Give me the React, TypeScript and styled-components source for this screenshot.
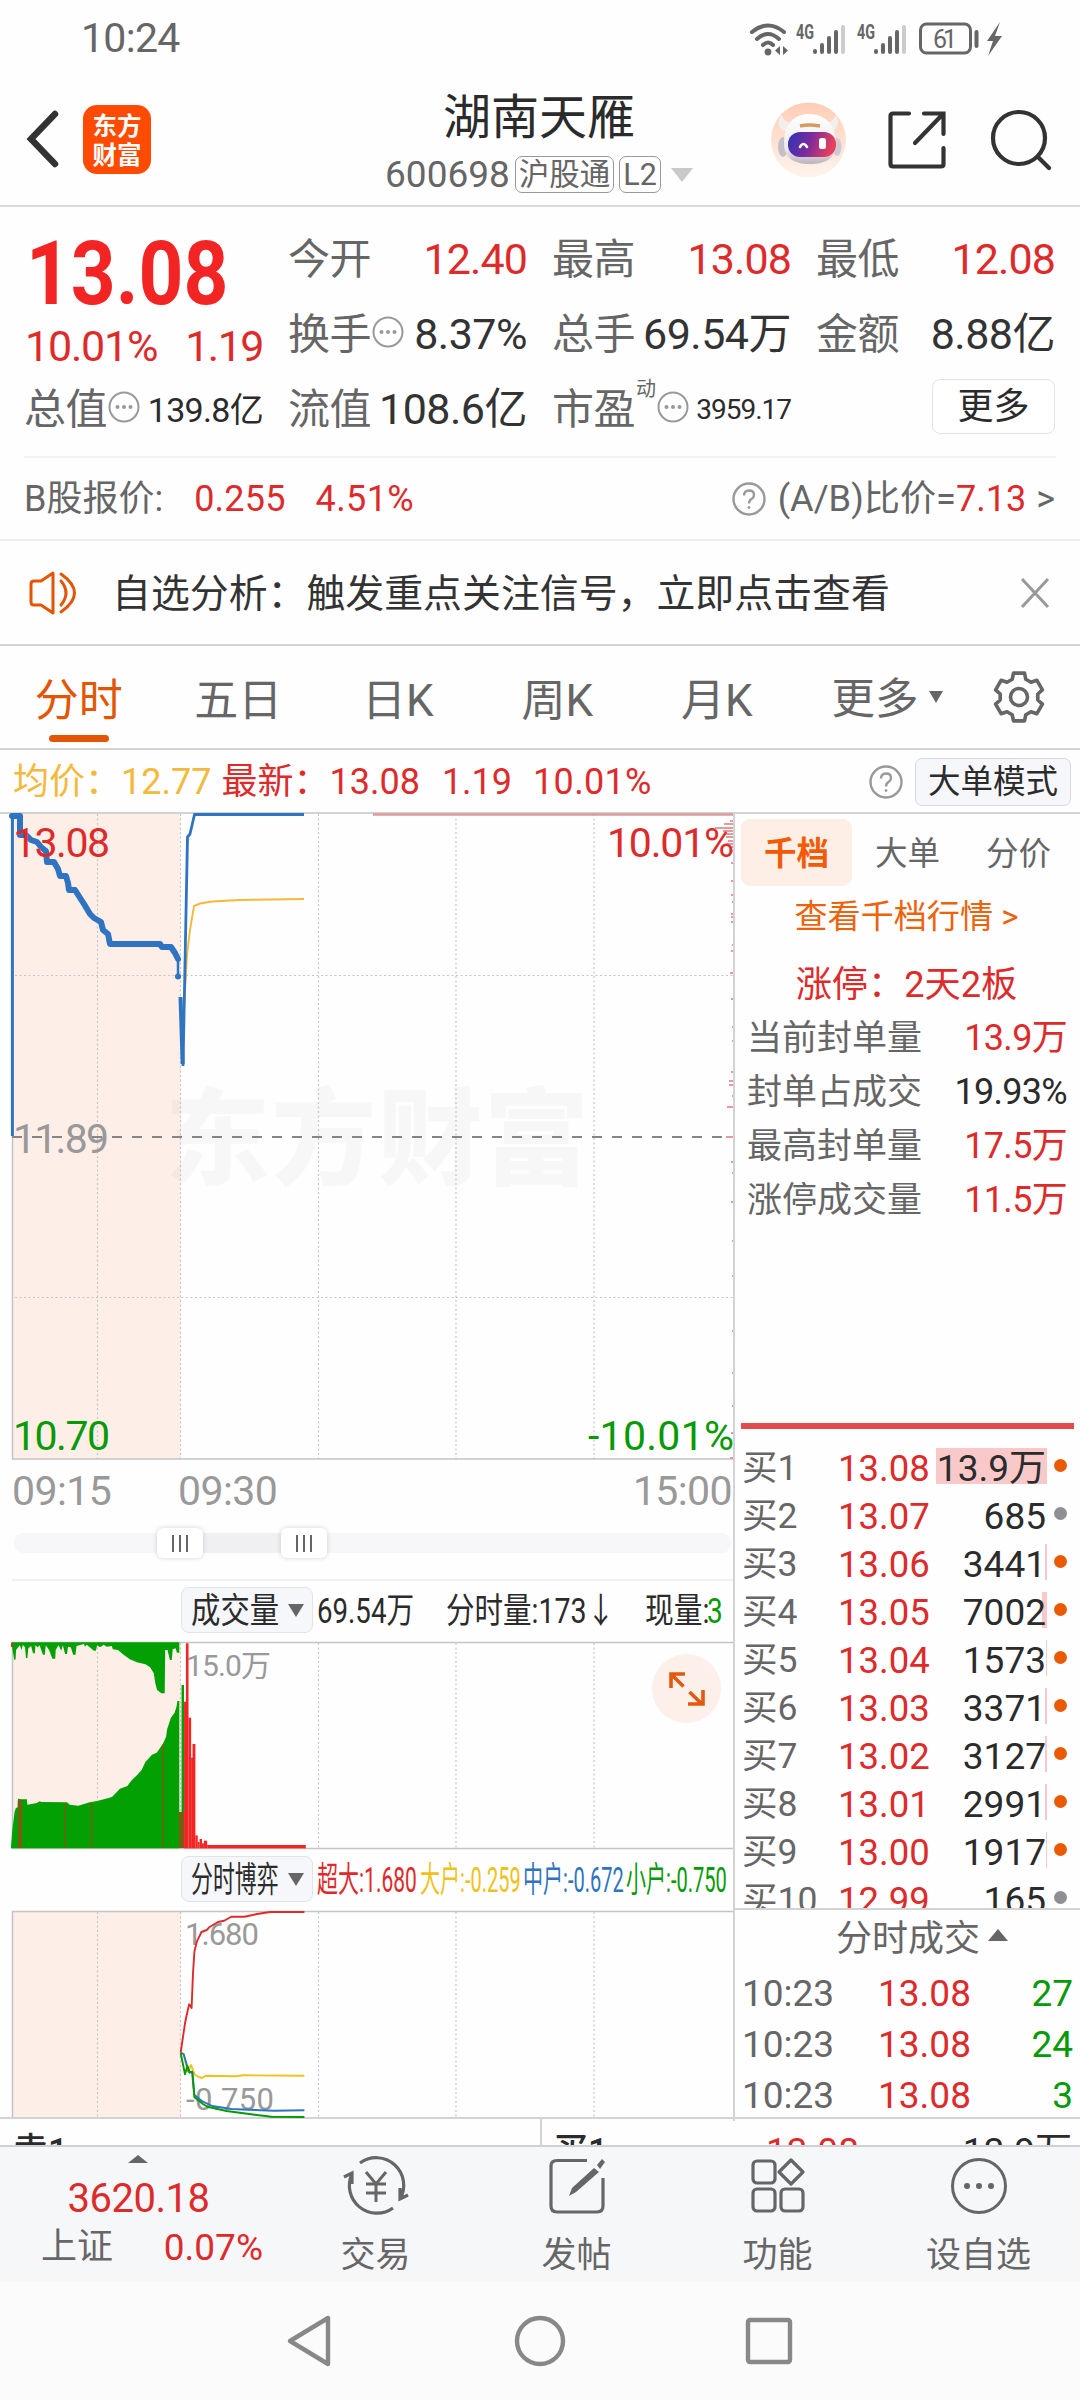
import React from 'react';
import styled, { createGlobalStyle } from 'styled-components';

const C = {
  red: '#dd2b2b',
  hot: '#f22424',
  orange: '#e35504',
  green: '#069a06',
  blue: '#2f74c0',
  gold: '#f3b93c',
  yellow: '#efc11c',
  ink: '#2b2b2b',
  grey: '#666',
  pale: '#999',
  line: '#d2d3d5',
};

const Global = createGlobalStyle`
  * { box-sizing: border-box; }
  body { margin: 0; background: #fefefe; }
  svg { display: block; flex: none; overflow: visible; }
`;

const Screen = styled.div`
  width: 1080px;
  height: 2400px;
  overflow: hidden;
  display: flex;
  flex-direction: column;
  background: #fefefe;
  color: ${C.ink};
  font-family: Roboto, 'Noto Sans CJK SC', sans-serif;
  white-space: nowrap;
  line-height: 1;
`;

const Text = styled.span<{ $size?: number; $color?: string; $ls?: number; $weight?: number }>`
  font-size: ${(p) => p.$size ?? 36}px;
  color: ${(p) => p.$color ?? C.ink};
  letter-spacing: ${(p) => p.$ls ?? 0}px;
  font-weight: ${(p) => p.$weight ?? 400};
`;

/* ---------- status bar and header ---------- */

const StatusBar = styled.div`
  height: 76px;
  padding: 1px 77px 0 81px;
  display: flex;
  align-items: center;
  justify-content: space-between;
`;

const Header = styled.header`
  height: 131px;
  padding: 0 28px 0 27px;
  display: grid;
  grid-template-columns: 300px 1fr 302px;
  border-bottom: 2px solid #d9d9d9;
`;

const HeaderLeft = styled.div`
  display: flex;
  align-items: center;
  gap: 24px;
  padding-bottom: 3px;
`;

const Logo = styled.div`
  width: 68px;
  height: 69px;
  border-radius: 14px;
  background: #ff4a02;
  display: grid;
  place-content: center;
  color: #fff;
  font: 700 24.5px/29px 'Noto Sans CJK SC', sans-serif;
  white-space: pre-line;
  padding-bottom: 1px;
`;

const HeaderTitle = styled.div`
  display: flex;
  flex-direction: column;
  align-items: center;
  padding: 18px 0 0 1px;
  gap: 14px;
`;

const CodeRow = styled.div`
  display: flex;
  align-items: center;
  gap: 5px;
  height: 37px;
`;

const Tag = styled.span`
  height: 37px;
  padding: 1px 3px 0;
  border: 1.5px solid #999;
  border-radius: 7px;
  display: flex;
  align-items: center;
  color: ${C.grey};
  font-size: 30.5px;
`;

const HeaderRight = styled.div`
  display: flex;
  align-items: center;
  justify-content: flex-end;
  padding-bottom: 2px;
`;

/* ---------- quote ---------- */

const Quote = styled.section`
  height: 251px;
  margin: 0 24px;
  padding: 15px 1px 0;
  display: grid;
  grid-template-columns: repeat(4, 238px);
  grid-template-rows: repeat(3, 75px);
  column-gap: 26px;
  border-bottom: 2px solid #f3f3f3;
`;

const PriceBlock = styled.div`
  grid-row: span 2;
  display: flex;
  flex-direction: column;
`;

const BigPrice = styled.span`
  font-size: 89px;
  font-weight: 700;
  line-height: 103px;
  padding-left: 1px;
  color: ${C.hot};
  transform: scaleX(0.88);
  transform-origin: left center;
`;

const PriceSub = styled.div`
  display: flex;
  justify-content: space-between;
`;

const Cell = styled.div`
  display: flex;
  align-items: center;
  justify-content: space-between;
`;

const CellLabel = styled.span`
  display: flex;
  align-items: center;
  font-size: 42px;
  letter-spacing: -0.5px;
  margin-left: -1px;
  color: ${C.grey};
  & > svg {
    margin: -6px 0 0 1px;
  }
`;

const Sup = styled.sup`
  font-size: 20px;
  align-self: flex-start;
  margin: -10px 0 0 1px;
  line-height: 20px;
`;

const MoreButton = styled.button`
  width: 123px;
  height: 55px;
  margin: -6px 0 0 auto;
  padding: 0;
  border: 1.5px solid #e2e5e6;
  border-radius: 8px;
  background: #fff;
  font: 36px/1 Roboto, 'Noto Sans CJK SC', sans-serif;
  color: ${C.ink};
`;

const BRow = styled.section`
  height: 83px;
  padding: 1px 25px 0 24px;
  display: flex;
  align-items: center;
  border-bottom: 2px solid #eee;
`;

const Spacer = styled.div`
  flex: 1;
`;

const Notice = styled.section`
  height: 105px;
  padding: 1px 30px 0 29px;
  display: flex;
  align-items: center;
  border-bottom: 2px solid ${C.line};
`;

/* ---------- period tabs ---------- */

const PeriodTabs = styled.nav`
  height: 104px;
  display: flex;
  border-bottom: 2px solid ${C.line};
`;

const PeriodTab = styled.button<{ $active?: boolean }>`
  width: 159.5px;
  padding: 0 2px 0 0;
  border: 0;
  background: none;
  display: flex;
  flex-direction: column;
  align-items: center;
  font: 400 44px/110px Roboto, 'Noto Sans CJK SC', sans-serif;
  color: ${(p) => (p.$active ? C.orange : C.grey)};
  &::after {
    content: '';
    width: 60px;
    height: 7px;
    margin-top: -21px;
    border-radius: 4px;
    background: ${(p) => (p.$active ? C.orange : 'transparent')};
  }
`;

const MoreTab = styled.div`
  width: 159px;
  padding: 1px 0 0 34px;
  display: flex;
  align-items: center;
  gap: 10px;
  color: ${C.grey};
  font-size: 43.5px;
  height: 107px;
  & > i {
    margin-bottom: 7px;
  }
`;

const Down = styled.i<{ $w?: number; $h?: number; $c?: string }>`
  width: 0;
  height: 0;
  border: ${(p) => (p.$w ?? 16) / 2}px solid transparent;
  border-top: ${(p) => p.$h ?? 13}px solid ${(p) => p.$c ?? C.grey};
  border-bottom: 0;
`;

const Up = styled.i<{ $w: number; $h: number }>`
  width: 0;
  height: 0;
  border: ${(p) => p.$w / 2}px solid transparent;
  border-bottom: ${(p) => p.$h}px solid ${C.grey};
  border-top: 0;
`;

const InfoRow = styled.section`
  height: 62px;
  padding: 2px 9px 0 13px;
  display: flex;
  align-items: center;
`;

const ModeButton = styled.button`
  width: 156px;
  height: 48px;
  margin-left: 12px;
  padding: 0;
  border: 1.5px solid #d6d9de;
  border-radius: 7px;
  background: #f6f7fa;
  font: 32.5px/1 Roboto, 'Noto Sans CJK SC', sans-serif;
  color: ${C.ink};
`;

/* ---------- main split ---------- */

const Main = styled.main`
  height: 1307px;
  display: grid;
  grid-template-columns: 735px 345px;
  border-top: 2px solid ${C.line};
  border-bottom: 2px solid ${C.line};
`;

const ChartColumn = styled.div`
  border-right: 2px solid ${C.line};
  display: flex;
  flex-direction: column;
`;

const Axis = styled.div`
  height: 72px;
  padding: 12px 1px 0 12px;
  display: grid;
  grid-template-columns: 166px 1fr auto;
  font-size: 41px;
  letter-spacing: -0.6px;
  line-height: 36px;
  color: ${C.pale};
`;

const Slider = styled.div`
  height: 48px;
  margin-left: 12px;
  padding: 0 2px;
  display: flex;
  align-items: flex-start;
  border-bottom: 2px solid #f0f0f0;
`;

const Track = styled.div<{ $w: number; $on?: boolean; $side?: 'l' | 'r' }>`
  width: ${(p) => p.$w}px;
  height: 20px;
  background: ${(p) => (p.$on ? '#f0f0f2' : '#f7f7fa')};
  border-radius: ${(p) => (p.$side === 'l' ? '9px 0 0 9px' : p.$side === 'r' ? '0 9px 9px 0' : 0)};
`;

const Handle = styled.div`
  width: 46px;
  height: 30px;
  margin-top: -5px;
  border-radius: 6px;
  background: #fff;
  box-shadow: 0 0 5px rgba(0, 0, 0, 0.17);
  display: flex;
  align-items: center;
  justify-content: center;
  gap: 5px;
  z-index: 1;
  & > i {
    width: 2px;
    height: 17px;
    background: ${C.grey};
  }
`;

const IndicatorRow = styled.div<{ $h: number; $pt: number }>`
  height: ${(p) => p.$h}px;
  padding: ${(p) => p.$pt}px 0 0 181px;
  display: flex;
`;

const Picker = styled.div`
  width: 132px;
  height: 46px;
  padding: 0 8px 0 9px;
  margin-right: 4px;
  border: 1.5px solid #e0e4e7;
  border-radius: 8px;
  background: #f6f7fa;
  display: flex;
  align-items: center;
  justify-content: space-between;
`;

const Slot = styled.span<{ $w: number }>`
  width: ${(p) => p.$w}px;
  height: 46px;
  line-height: 50px;
  flex: none;
`;

const Narrow = styled.span<{ $x: number; $color?: string; $size?: number }>`
  display: inline-block;
  transform: scaleX(${(p) => p.$x});
  transform-origin: left center;
  font-size: ${(p) => p.$size ?? 35}px;
  color: ${(p) => p.$color ?? C.ink};
`;

const ChartBox = styled.div`
  position: relative;
`;

const ExpandButton = styled.button`
  position: absolute;
  right: 12px;
  top: 12px;
  width: 69px;
  height: 69px;
  padding: 0;
  border: 0;
  border-radius: 50%;
  background: #fdefe9;
  display: grid;
  place-items: center;
`;

/* ---------- order book ---------- */

const Book = styled.aside`
  display: flex;
  flex-direction: column;
  min-width: 0;
`;

const BookTabs = styled.div`
  padding: 5px 6px 0;
  display: grid;
  grid-template-columns: repeat(3, 111px);
`;

const BookTab = styled.button<{ $active?: boolean }>`
  height: 67px;
  padding: 4px 0 0;
  border: 0;
  border-radius: 9px;
  background: ${(p) => (p.$active ? '#fdeee6' : 'none')};
  color: ${(p) => (p.$active ? '#f25a05' : C.grey)};
  font: ${(p) => (p.$active ? 700 : 400)} 32.5px/1 Roboto, 'Noto Sans CJK SC', sans-serif;
`;

const BookLink = styled.div<{ $h: number }>`
  height: ${(p) => p.$h}px;
  padding-right: 2px;
  display: flex;
  align-items: center;
  justify-content: center;
`;

const StatList = styled.div`
  height: 412px;
  margin-top: -11px;
  padding: 0 13px 0 12px;
`;

const StatRow = styled.div`
  height: 54px;
  display: flex;
  align-items: center;
  justify-content: space-between;
`;

const RedRule = styled.div`
  height: 6px;
  margin: 0 6px;
  background: #e34c4c;
`;

const Levels = styled.div`
  height: 481px;
  padding-top: 16px;
  overflow: hidden;
  border-bottom: 2px solid ${C.line};
`;

const Level = styled.div`
  height: 48px;
  padding: 0 13px 0 7px;
  display: grid;
  grid-template-columns: 96px 95px 1fr 20px;
  align-items: center;
`;

const Volume = styled.div<{ $fill: number }>`
  height: 36px;
  padding-right: 1px;
  margin-top: -7px;
  text-align: right;
  font-size: 37px;
  line-height: 42px;
  background: linear-gradient(#f9c9c9, #f9c9c9) right / ${(p) => p.$fill}px 100% no-repeat;
`;

const Dot = styled.i<{ $on: boolean }>`
  width: 13px;
  height: 13px;
  margin-top: -8px;
  justify-self: end;
  border-radius: 50%;
  background: ${(p) => (p.$on ? '#e85a04' : '#8e8e94')};
`;

const TradesHead = styled.div`
  height: 58px;
  padding-left: 101px;
  display: flex;
  align-items: center;
  gap: 8px;
  font-size: 36px;
  color: ${C.grey};
  & > i {
    margin-bottom: 9px;
  }
`;

const Trade = styled.div`
  height: 51px;
  padding: 0 7px 0 7px;
  display: grid;
  grid-template-columns: 136px 1fr auto;
  align-items: center;
`;

/* ---------- bottom ---------- */

const Clipped = styled.div`
  height: 28px;
  display: grid;
  grid-template-columns: 540px 539px;
  overflow: hidden;
  border-bottom: 2px solid #cdd1d5;
`;

const ClippedCell = styled.div`
  height: 60px;
  padding: 5px 7px 0 13px;
  display: grid;
  grid-template-columns: 213px 1fr auto;
  align-items: center;
  & + & {
    border-left: 2px solid ${C.line};
    padding-left: 11px;
  }
`;

const BottomNav = styled.nav`
  height: 135px;
  display: grid;
  grid-template-columns: 275px repeat(4, 201px);
  background: #f6f7f9;
`;

const IndexBlock = styled.div`
  display: flex;
  flex-direction: column;
  align-items: center;
  padding-top: 8px;
`;

const IndexRow = styled.div`
  width: 275px;
  padding: 11px 12px 0 41px;
  display: flex;
  justify-content: space-between;
`;

const NavItem = styled.div`
  display: flex;
  flex-direction: column;
  align-items: center;
  padding-top: 9px;
  gap: 21.5px;
`;

const SystemNav = styled.div`
  flex: 1;
  background: #fbfbfb;
  display: flex;
  justify-content: space-between;
  padding: 32px 285px 0 286px;
`;

/* ---------- icons ---------- */

const StatusGroup = styled.div`
  display: flex;
  align-items: center;
  & > :nth-child(2) { margin-left: 7px; }
  & > :nth-child(3) { margin-left: 9px; }
  & > :nth-child(4) { margin-left: 10px; }
`;

const Signal = () => (
  <svg width="52" height="34" viewBox="0 0 52 34">
    <text x="0" y="17" fontSize="20" fontWeight="700" textLength="18" lengthAdjust="spacingAndGlyphs" fill="#666">4G</text>
    <g stroke="#666" strokeWidth="4" strokeLinecap="round">
      <path d="M19 29v1M26 23v7M33 16v14M40 10v20" />
      <path d="M47 5v25" stroke="#ccc" />
    </g>
  </svg>
);

const StatusIcons = () => (
  <StatusGroup>
    <svg width="39" height="34" viewBox="0 0 39 34" fill="none" stroke="#666" strokeWidth="4" strokeLinecap="round">
      <path d="M2 10Q18 -3 34 10M7 17Q18 7 29 17M13 23Q18 18 23 23" />
      <circle cx="18" cy="30" r="3.4" fill="#666" stroke="none" />
      <path d="M30 24v9l-5-4.500zM33 24v9l5-4.500z" fill="#666" stroke="none" />
    </svg>
    <Signal />
    <Signal />
    <svg width="84" height="34" viewBox="0 0 84 34">
      <rect x="1.500" y="2" width="50" height="29" rx="6" fill="none" stroke="#666" strokeWidth="3" />
      <path d="M57.500 10v14" stroke="#666" strokeWidth="4" strokeLinecap="round" />
      <text x="14" y="26" fontSize="25" fill="#666" textLength="24">61</text>
      <path d="M81 0L68 19h6l-5 15L83 14h-7z" fill="#666" />
    </svg>
  </StatusGroup>
);

const Robot = () => (
  <svg width="75" height="78" viewBox="0 0 75 78">
    <defs>
      <linearGradient id="halo" x1="0" y1="0" x2="0" y2="1">
        <stop offset="0" stopColor="#ffcdb5" />
        <stop offset="1" stopColor="#fff4ee" />
      </linearGradient>
      <linearGradient id="visor" x1="0" y1="0" x2="1" y2="0.200">
        <stop offset="0" stopColor="#2b35b8" />
        <stop offset="0.500" stopColor="#7a2a9e" />
        <stop offset="1" stopColor="#e8405c" />
      </linearGradient>
      <linearGradient id="shell" x1="0" y1="0" x2="0" y2="1">
        <stop offset="0" stopColor="#ffffff" />
        <stop offset="0.700" stopColor="#eceaee" />
        <stop offset="1" stopColor="#b9b4bd" />
      </linearGradient>
    </defs>
    <circle cx="37.500" cy="39" r="37.500" fill="url(#halo)" />
    <path d="M11 14c-5 5-5 13 4 17l8-9c-6 0-11-2-12-8zM64 14c5 5 4 13-4 17l-8-9c7 0 11-2 12-8z" fill="#f3eeee" />
    <ellipse cx="12" cy="46" rx="5" ry="10" fill="#c5c0c8" />
    <ellipse cx="66" cy="46" rx="4.500" ry="9" fill="#cfcad2" />
    <path d="M13 42c0-20 11-29 25-29s27 9 27 29c0 16-11 21-26 21s-26-5-26-21z" fill="url(#shell)" />
    <rect x="17" y="31" width="48" height="25" rx="12" fill="url(#visor)" />
    <path d="M29 25q9-2 20 0" stroke="#d99a62" strokeWidth="3.500" fill="none" />
    <path d="M29 46q3.500-6 7 0" stroke="#fff" strokeWidth="2.600" fill="none" strokeLinecap="round" />
    <rect x="48" y="37" width="7" height="11" rx="2.500" fill="#fff" />
  </svg>
);

const MoreDots = () => (
  <svg width="32" height="32" viewBox="0 0 32 32" fill={C.pale}>
    <circle cx="16" cy="16" r="14.500" fill="none" stroke={C.pale} strokeWidth="2" />
    <circle cx="9.500" cy="16" r="2" /><circle cx="16" cy="16" r="2" /><circle cx="22.500" cy="16" r="2" />
  </svg>
);

const Help = () => (
  <svg width="34" height="34" viewBox="0 0 34 34" fill="none" stroke={C.pale} strokeWidth="2.400">
    <circle cx="17" cy="17" r="15.500" />
    <path d="M12 13.500q0-5 5-5t5 4.500q0 2.500-2.500 4t-2.500 4.500" />
    <circle cx="17" cy="25.500" r="1" fill={C.pale} strokeWidth="1" />
  </svg>
);

const gear = Array.from({ length: 6 }, (_, i) => {
  const at = (r: number, deg: number) => {
    const a = ((i * 60 + deg - 90) * Math.PI) / 180;
    return `${(27 + r * Math.cos(a)).toFixed(1)} ${(27 + r * Math.sin(a)).toFixed(1)}`;
  };
  return `${at(24.500, -13)}L${at(24.500, 13)}L${at(19, 21)}L${at(19, 39)}`;
}).join('L');

/* ---------- chart data ---------- */

const pts = (raw: number[][], sx: number, y0: number) =>
  raw.map(([x, y]) => `${(x / sx).toFixed(1)},${(y / 3 + y0).toFixed(1)}`).join(' ');

const volTop = [[24, 37], [30, 90], [33, 88], [34, 60], [42, 46], [46, 60], [48, 44], [53, 52], [55, 84], [58, 84], [60, 55], [66, 48], [70, 70], [74, 70], [75, 46], [80, 52], [84, 46], [91, 74], [95, 74], [97, 46], [104, 60], [111, 86], [117, 86], [118, 60], [124, 46], [130, 62], [133, 46], [138, 72], [142, 72], [144, 50], [150, 52], [155, 74], [160, 74], [162, 48], [178, 42], [180, 50], [184, 44], [199, 62], [203, 62], [206, 46], [212, 52], [220, 44], [226, 50], [237, 48], [239, 58], [250, 60], [262, 74], [275, 88], [290, 97], [308, 103], [318, 112], [326, 130], [329, 160], [333, 180], [342, 190], [349, 190], [350, 60], [355, 60], [360, 90], [364, 90], [366, 58], [372, 55], [375, 68], [380, 68], [380, 37]];
const volBottom = [[23, 655], [26, 600], [31, 545], [34, 533], [37, 533], [38, 506], [46, 508], [57, 508], [58, 524], [78, 519], [84, 514], [88, 516], [142, 517], [148, 524], [166, 527], [190, 517], [206, 513], [232, 503], [238, 500], [254, 476], [270, 468], [278, 452], [290, 436], [300, 420], [308, 396], [322, 374], [332, 368], [345, 342], [352, 320], [354, 298], [362, 264], [370, 248], [374, 230], [376, 213], [380, 213], [380, 655]];
const volRed = [[390, 4.500, 215], [394, 5.500, 40], [399.500, 5.500, 263], [405, 4, 383], [408, 6, 342], [414, 5, 616], [419, 4, 636], [423, 5, 627], [428, 4, 640], [432, 7, 632], [439, 209, 645]];

const flows = [
  { color: C.yellow, raw: [[383, 490], [389, 492], [398, 545], [405, 525], [412, 552], [420, 560], [428, 564], [436, 557], [500, 559], [515, 556], [645, 557]] },
  { color: C.blue, raw: [[383, 488], [389, 492], [400, 545], [408, 548], [412, 615], [430, 635], [450, 648], [490, 657], [540, 660], [580, 662], [645, 661]] },
  { color: C.green, raw: [[383, 490], [392, 553], [397, 527], [402, 548], [407, 545], [412, 622], [430, 642], [440, 650], [480, 663], [540, 674], [575, 680], [645, 681]] },
  { color: C.red, raw: [[383, 487], [392, 400], [397, 365], [401, 343], [406, 354], [409, 250], [412, 185], [417, 155], [427, 126], [438, 120], [445, 110], [462, 96], [475, 92], [490, 80], [518, 80], [545, 72], [572, 66], [645, 66]] },
];

/* distribution bars on the right edge: y, length */
const ladder = [[820, 3], [823, 9], [827, 18], [830, 10], [833, 8], [836, 7], [840, 5], [843, 6], [846, 2], [850, 1], [862, 2], [880, 2], [894, 2], [901, 1], [913, 2], [916, 2], [921, 2], [944, 1], [950, 2], [972, 3], [998, 2], [1026, 1], [1040, 1], [1071, 2], [1080, 4], [1084, 4], [1095, 1], [1106, 6], [1136, 7], [1161, 2], [1172, 1], [1201, 2], [1240, 1], [1275, 1], [1330, 1], [1372, 1], [1405, 1], [1432, 2], [1457, 3]];

const Grid = ({ y1, y2 }: { y1: number; y2: number }) => (
  <g stroke="#c6c6c6" strokeWidth="1.200" strokeDasharray="2 2.500">
    {[97.500, 180.500, 318.500, 456, 594].map((x) => (
      <line key={x} x1={x} x2={x} y1={y1} y2={y2} />
    ))}
  </g>
);

const PriceChart = () => (
  <svg width="734" height="647" viewBox="0 814 734 647">
    <rect x="13" y="814" width="168" height="645" fill="#fdeee7" />
    <text x="165" y="1176" textLength="424" fill="#000" fillOpacity="0.028" fontFamily="'Noto Sans CJK SC'" fontWeight="900" fontSize="105">东方财富</text>
    <Grid y1={814} y2={1459} />
    <g stroke="#c6c6c6" strokeWidth="1.200" strokeDasharray="2 2.500">
      <line x1="15" x2="733" y1="975.500" y2="975.500" />
      <line x1="15" x2="733" y1="1297.500" y2="1297.500" />
    </g>
    <path d="M12.500 814V1459H733" fill="none" stroke="#c4c4c4" strokeWidth="1.500" />
    <line x1="12" x2="733" y1="1137" y2="1137" stroke="#858585" strokeWidth="2" strokeDasharray="10 10" />
    <g fill="#e79a9a">
      {ladder.map(([y, w]) => (
        <rect key={y} x={733 - w} y={y} width={w} height="2" />
      ))}
    </g>
    <line x1="373" x2="733" y1="814.500" y2="814.500" stroke="#dc9a9a" strokeWidth="2.500" />
    <polyline points="184,1010 187,955 190,930 194,906 200,903.500 212,901.500 240,900 270,899.500 304,899" fill="none" stroke={C.gold} strokeWidth="1.900" />
    <g fill="none" stroke={C.blue} strokeLinejoin="round">
      <path d="M12.400 814V1136" strokeWidth="3" />
      <path d="M12 816H20V835H26L31 840L37 842L41 847L46 851L47 862H54L58 869L60 876H66L68 883L69 890H75L84 904L90 914L94 918L101 922L103 930L108 934L110 944H160L162 947H171L175 953L178 959" strokeWidth="6" strokeLinecap="round" />
      <path d="M178 958V977" strokeWidth="2.500" />
      <path d="M180.500 997L182.700 1064" strokeWidth="4" />
      <path d="M183 1066L187.500 837L190 834L194.500 814.500H304" strokeWidth="2.800" />
    </g>
    <circle cx="178" cy="976.500" r="3" fill={C.blue} />
    <g fontSize="41">
      <text x="13" y="856.500" fill={C.red} textLength="97">13.08</text>
      <text x="607" y="856.500" fill={C.red} textLength="127">10.01%</text>
      <text x="13" y="1152.500" fill={C.pale} textLength="96">11.89</text>
      <text x="13" y="1449.500" fill={C.green} textLength="97">10.70</text>
      <text x="588" y="1449.500" fill={C.green} textLength="146">-10.01%</text>
    </g>
  </svg>
);

const VolumeChart = () => (
  <svg width="734" height="208" viewBox="0 1642 734 208">
    <rect x="13" y="1642" width="168" height="206" fill="#fdeee7" />
    <Grid y1={1643} y2={1848} />
    <path d="M733 1642.500H12.500V1848.500H733" fill="none" stroke="#c4c4c4" strokeWidth="1.500" />
    <polygon points={pts(volTop, 2.119, 1630)} fill="#02a002" />
    <polygon points={pts(volBottom, 2.119, 1630)} fill="#02a002" />
    <g fill="#7a5c12">
      <rect x="18" y="1800" width="4" height="48" />
      <rect x="64.500" y="1803" width="1.500" height="45" />
      <rect x="91" y="1803" width="1.500" height="45" />
      <rect x="162.500" y="1744" width="1.500" height="104" />
      <rect x="179" y="1812" width="5" height="36" />
    </g>
    <rect x="181.500" y="1685" width="2.500" height="127" fill="#02a002" />
    <rect x="11" y="1643" width="2" height="4" fill={C.red} />
    <text x="186" y="1676" fontSize="30" fill={C.pale} textLength="85">15.0万</text>
    <g fill="#f22424">
      {volRed.map(([x, w, y]) => (
        <rect key={x} x={x / 2.119} width={w / 2.119} y={y / 3 + 1630} height={(655 - y) / 3} />
      ))}
    </g>
  </svg>
);

const FlowChart = () => (
  <svg width="734" height="207" viewBox="0 1910 734 207">
    <rect x="13" y="1911" width="168" height="206" fill="#fdeee7" />
    <Grid y1={1912} y2={2117} />
    <path d="M733 1911.500H12.500V2117" fill="none" stroke="#c4c4c4" strokeWidth="1.500" />
    <g fontSize="31" fill={C.pale}>
      <text x="185" y="1945" textLength="74">1.680</text>
      <text x="186" y="2110" textLength="88">-0.750</text>
    </g>
    {flows.map((f) => (
      <polyline key={f.color} points={pts(f.raw, 2.119, 1890)} fill="none" stroke={f.color} strokeWidth="1.900" strokeLinejoin="round" />
    ))}
  </svg>
);

const levels: [string, string, string, number, boolean][] = [
  ['买1', '13.08', '13.9万', 111, true],
  ['买2', '13.07', '685', 0, false],
  ['买3', '13.06', '3441', 2, true],
  ['买4', '13.05', '7002', 5, true],
  ['买5', '13.04', '1573', 1, true],
  ['买6', '13.03', '3371', 2, true],
  ['买7', '13.02', '3127', 2, true],
  ['买8', '13.01', '2991', 2, true],
  ['买9', '13.00', '1917', 1, true],
  ['买10', '12.99', '165', 0, false],
];

const stats: [string, string, boolean][] = [
  ['当前封单量', '13.9万', true],
  ['封单占成交', '19.93%', false],
  ['最高封单量', '17.5万', true],
  ['涨停成交量', '11.5万', true],
];

const QuoteCell = ({ label, value, up, dots }: { label: string; value: string; up?: boolean; dots?: boolean }) => (
  <Cell>
    <CellLabel>{label}{dots && <MoreDots />}</CellLabel>
    <Text $size={43} $ls={up ? -0.900 : -0.500} $color={up ? C.red : '#333'}>{value}</Text>
  </Cell>
);

export default function App() {
  return (
    <Screen>
      <Global />
      <StatusBar>
        <Text $size={41} $ls={-0.700} $color={C.grey}>10:24</Text>
        <StatusIcons />
      </StatusBar>

      <Header>
        <HeaderLeft>
          <svg width="32" height="58" viewBox="0 0 32 58" fill="none" stroke="#333" strokeWidth="6.500" strokeLinecap="round">
            <path d="M28 4L4 29L28 54" />
          </svg>
          <Logo>{'东方\n财富'}</Logo>
        </HeaderLeft>
        <HeaderTitle>
          <Text $size={48}>湖南天雁</Text>
          <CodeRow>
            <Text $size={37} $color={C.grey}>600698</Text>
            <Tag>沪股通</Tag>
            <Tag>L2</Tag>
            <Down $w={22} $h={14} $c="#c9c9c9" style={{ marginLeft: 5 }} />
          </CodeRow>
        </HeaderTitle>
        <HeaderRight>
          <Robot />
          <svg width="60" height="60" viewBox="0 0 60 60" fill="none" stroke="#333" strokeWidth="4.200" strokeLinecap="round" style={{ marginLeft: 41 }}>
            <path d="M22 3.500H6Q3.500 3.500 3.500 6V54Q3.500 56.500 6 56.500H54Q56.500 56.500 56.500 54V38M37 3.500H56.500V24M55 5L28 33" />
          </svg>
          <svg width="62" height="62" viewBox="0 0 62 62" fill="none" stroke="#333" strokeWidth="4.200" strokeLinecap="round" style={{ marginLeft: 43 }}>
            <circle cx="29" cy="29" r="26" />
            <path d="M48 48L59 59" />
          </svg>
        </HeaderRight>
      </Header>

      <Quote>
        <PriceBlock>
          <BigPrice>13.08</BigPrice>
          <PriceSub>
            <Text $size={43} $ls={-1.200} $color={C.red}>10.01%</Text>
            <Text $size={43} $ls={-1.500} $color={C.red}>1.19</Text>
          </PriceSub>
        </PriceBlock>
        <QuoteCell label="今开" value="12.40" up />
        <QuoteCell label="最高" value="13.08" up />
        <QuoteCell label="最低" value="12.08" up />
        <QuoteCell label="换手" value="8.37%" dots />
        <QuoteCell label="总手" value="69.54万" />
        <QuoteCell label="金额" value="8.88亿" />
        <Cell>
          <CellLabel>总值<MoreDots /></CellLabel>
          <Text $size={34} $ls={-0.700}>139.8亿</Text>
        </Cell>
        <QuoteCell label="流值" value="108.6亿" />
        <Cell>
          <CellLabel>市盈<Sup>动</Sup><MoreDots /></CellLabel>
          <Text $size={28} $ls={-1}>3959.17</Text>
        </Cell>
        <Cell><MoreButton>更多</MoreButton></Cell>
      </Quote>

      <BRow>
        <Text $color={C.grey}>B股报价:</Text>
        <Text $color={C.red} $ls={0.200} style={{ marginLeft: 31 }}>0.255</Text>
        <Text $color={C.red} $ls={0.400} style={{ marginLeft: 30 }}>4.51%</Text>
        <Spacer />
        <Help />
        <Text $color={C.grey} $size={36.200} style={{ marginLeft: 12 }}>(A/B)比价=</Text>
        <Text $color={C.red}>7.13</Text>
        <Text $color={C.grey} style={{ marginLeft: 10 }}>&gt;</Text>
      </BRow>

      <Notice>
        <svg width="52" height="46" viewBox="0 0 52 46" fill="none" stroke={C.orange} strokeWidth="3" strokeLinejoin="round" strokeLinecap="round">
          <path d="M24 3L12 11H5Q2 11 2 14V32Q2 35 5 35H12L24 43ZM32 11Q42 23 32 35M32 4Q59 23 32 42" />
        </svg>
        <Text $size={38.900} $color="#333" style={{ margin: '2px 0 0 31px' }}>自选分析：触发重点关注信号，立即点击查看</Text>
        <Spacer />
        <svg width="30" height="32" viewBox="0 0 30 32" stroke={C.pale} strokeWidth="3"><path d="M2 2L28 30M28 2L2 30" /></svg>
      </Notice>

      <PeriodTabs>
        <PeriodTab $active>分时</PeriodTab>
        <PeriodTab>五日</PeriodTab>
        <PeriodTab>日K</PeriodTab>
        <PeriodTab>周K</PeriodTab>
        <PeriodTab>月K</PeriodTab>
        <MoreTab>更多<Down $w={15} $h={12} /></MoreTab>
        <svg width="54" height="54" viewBox="0 0 54 54" fill="none" stroke={C.grey} strokeWidth="3.600" strokeLinejoin="round" style={{ margin: '24px 0 0 35px' }}>
          <path d={`M${gear}Z`} />
          <circle cx="27" cy="27" r="8.500" />
        </svg>
      </PeriodTabs>

      <InfoRow>
        <Text $color={C.gold}>均价：</Text>
        <Text $color={C.gold}>12.77</Text>
        <Text $color={C.red} style={{ marginLeft: 10 }}>最新：</Text>
        <Text $color={C.red}>13.08</Text>
        <Text $color={C.red} style={{ marginLeft: 22 }}>1.19</Text>
        <Text $color={C.red} $ls={0.300} style={{ marginLeft: 21 }}>10.01%</Text>
        <Spacer />
        <Help />
        <ModeButton>大单模式</ModeButton>
      </InfoRow>

      <Main>
        <ChartColumn>
          <PriceChart />
          <Axis><span>09:15</span><span>09:30</span><span>15:00</span></Axis>
          <Slider>
            <Track $w={143} $side="l" />
            <Handle><i /><i /><i /></Handle>
            <Track $w={78} $on />
            <Handle><i /><i /><i /></Handle>
            <Track $w={405} $side="r" />
          </Slider>
          <IndicatorRow $h={61} $pt={6}>
            <Picker><Slot $w={88}><Narrow $x={0.840}>成交量</Narrow></Slot><Down /></Picker>
            <Slot $w={129}><Narrow $x={0.790}>69.54万</Narrow></Slot>
            <Slot $w={199}><Narrow $x={0.815}>分时量:173↓</Narrow></Slot>
            <Slot $w={62}><Narrow $x={0.820}>现量:</Narrow></Slot>
            <Slot $w={14}><Narrow $x={0.800} $color={C.green}>3</Narrow></Slot>
          </IndicatorRow>
          <ChartBox>
            <VolumeChart />
            <ExpandButton aria-label="展开">
              <svg width="36" height="34" viewBox="0 0 36 34" fill="none" stroke="#e2590f" strokeWidth="3.600">
                <path d="M2 16V2H16M2 2L14.500 14.500M20.500 20L33 32M19 32H34V18" />
              </svg>
            </ExpandButton>
          </ChartBox>
          <IndicatorRow $h={60} $pt={6}>
            <Picker><Slot $w={88}><Narrow $x={0.625}>分时博弈</Narrow></Slot><Down /></Picker>
            <Slot $w={103}><Narrow $x={0.600} $color={C.red}>超大:1.680</Narrow></Slot>
            <Slot $w={103}><Narrow $x={0.572} $color={C.yellow}>大户:-0.259</Narrow></Slot>
            <Slot $w={103}><Narrow $x={0.572} $color={C.blue}>中户:-0.672</Narrow></Slot>
            <Slot $w={100}><Narrow $x={0.572} $color={C.green}>小户:-0.750</Narrow></Slot>
          </IndicatorRow>
          <FlowChart />
        </ChartColumn>

        <Book>
          <BookTabs>
            <BookTab $active>千档</BookTab>
            <BookTab>大单</BookTab>
            <BookTab>分价</BookTab>
          </BookTabs>
          <BookLink $h={62}><Text $size={33.100} $color="#ec630c">查看千档行情 &gt;</Text></BookLink>
          <BookLink $h={74}><Text $size={36.200} $color={C.red}>涨停：2天2板</Text></BookLink>
          <StatList>
            {stats.map(([label, value, up]) => (
              <StatRow key={label}>
                <Text $size={35} $color={C.grey}>{label}</Text>
                <Text $size={36} $ls={-0.700} $color={up ? C.red : C.ink}>{value}</Text>
              </StatRow>
            ))}
          </StatList>
          <RedRule />
          <Levels>
            {levels.map(([name, price, vol, fill, on]) => (
              <Level key={name}>
                <Text $size={35.500} $color={C.grey}>{name}</Text>
                <Text $size={36.500} $color={C.red}>{price}</Text>
                <Volume $fill={fill}>{vol}</Volume>
                <Dot $on={on} />
              </Level>
            ))}
          </Levels>
          <TradesHead>分时成交<Up $w={21} $h={12} /></TradesHead>
          {['27', '24', '3'].map((n) => (
            <Trade key={n}>
              <Text $size={37} $color={C.grey}>10:23</Text>
              <Text $size={37} $color={C.red}>13.08</Text>
              <Text $size={37} $color={C.green}>{n}</Text>
            </Trade>
          ))}
        </Book>
      </Main>

      <Clipped>
        <ClippedCell><Text $size={35} $weight={500}>卖1</Text></ClippedCell>
        <ClippedCell>
          <Text $size={35} $weight={500}>买1</Text>
          <Text $size={37} $color={C.red}>13.08</Text>
          <Text $size={37}>13.9万</Text>
        </ClippedCell>
      </Clipped>

      <BottomNav>
        <IndexBlock>
          <Up $w={21} $h={8} />
          <Text $size={40} $color={C.red} $ls={-0.500} style={{ margin: '16px 0 -1px 2px' }}>3620.18</Text>
          <IndexRow>
            <Text $size={36} $color={C.grey}>上证</Text>
            <Text $size={37} $color={C.red}>0.07%</Text>
          </IndexRow>
        </IndexBlock>
        <NavItem>
          <svg width="66" height="60" viewBox="0 0 66 60" fill="none" stroke={C.grey} strokeWidth="3.200">
            <path d="M17 7A27.500 27.500 0 0 1 57 43M50 52A27.500 27.500 0 0 1 9 18M1 21L9 17V28M65 39L57 43V32" />
            <path d="M23 16L33 28L43 16M33 28V46M23 28H43M23 37H43" strokeWidth="3" />
          </svg>
          <Text $size={35} $color={C.grey}>交易</Text>
        </NavItem>
        <NavItem>
          <svg width="56" height="60" viewBox="0 0 56 60" fill="none" stroke={C.grey} strokeWidth="3.200">
            <path d="M38 4.500H8Q2 4.500 2 10V50Q2 56 8 56H48Q54 56 54 50V22" />
            <path d="M48 9L53 3L56 6L51 13ZM45 12L50 16L27 36L20 40L23 32Z" fill={C.grey} stroke="none" />
          </svg>
          <Text $size={35} $color={C.grey}>发帖</Text>
        </NavItem>
        <NavItem>
          <svg width="56" height="60" viewBox="0 0 56 60" fill="none" stroke={C.grey} strokeWidth="3.200" strokeLinejoin="round">
            <rect x="3" y="5" width="22" height="22" rx="4" />
            <rect x="3" y="33" width="22" height="22" rx="4" />
            <rect x="31" y="33" width="22" height="22" rx="4" />
            <path d="M41 4L53 16L41 28L29 16Z" />
          </svg>
          <Text $size={35} $color={C.grey}>功能</Text>
        </NavItem>
        <NavItem>
          <svg width="58" height="60" viewBox="0 0 58 60" fill={C.grey}>
            <circle cx="29" cy="30" r="26.500" fill="none" stroke={C.grey} strokeWidth="3" />
            <circle cx="17" cy="30" r="3" /><circle cx="29" cy="30" r="3" /><circle cx="41" cy="30" r="3" />
          </svg>
          <Text $size={35} $color={C.grey}>设自选</Text>
        </NavItem>
      </BottomNav>

      <SystemNav>
        <svg width="46" height="54" viewBox="0 0 46 54" fill="none" stroke="#888" strokeWidth="4.400" strokeLinejoin="round">
          <path d="M42 4V50L4 27Z" />
        </svg>
        <svg width="54" height="54" viewBox="0 0 54 54" fill="none" stroke="#888" strokeWidth="4.400">
          <circle cx="28" cy="27" r="23" />
        </svg>
        <svg width="50" height="54" viewBox="0 0 50 54" fill="none" stroke="#888" strokeWidth="4.400">
          <rect x="3" y="6" width="42" height="42" rx="2" />
        </svg>
      </SystemNav>
    </Screen>
  );
}
